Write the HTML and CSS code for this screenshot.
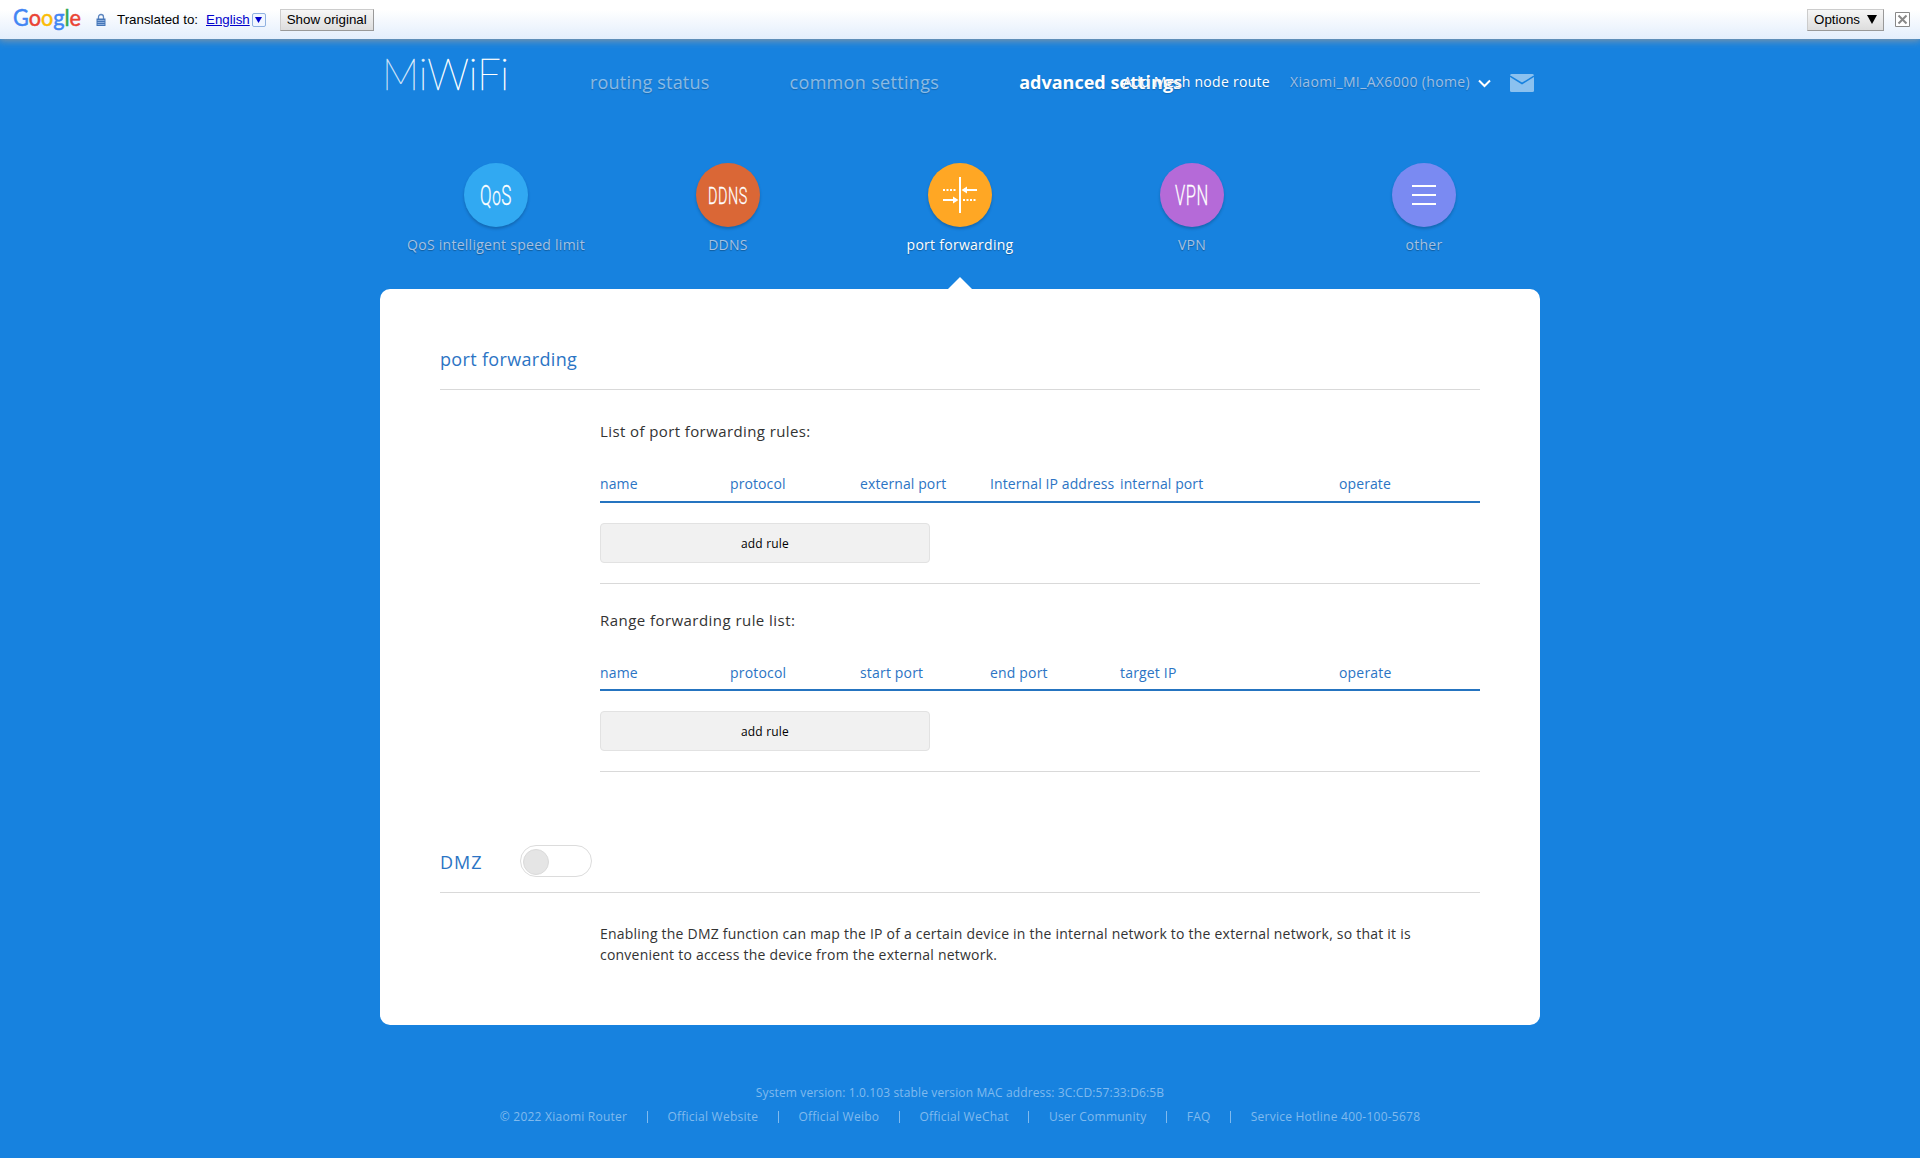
FILE: index.html
```
<!DOCTYPE html>
<html lang="en">
<head>
<meta charset="utf-8">
<title>Xiaomi Router</title>
<link rel="stylesheet" href="styles.css">
</head>
<body>
<div class="banner">
  <svg class="google" width="70" height="32" viewBox="0 0 70 32" aria-label="Google"><text x="-1" y="22" textLength="68" lengthAdjust="spacingAndGlyphs"><tspan fill="#4285f4" stroke="#4285f4">G</tspan><tspan fill="#ea4335" stroke="#ea4335">o</tspan><tspan fill="#fbbc05" stroke="#fbbc05">o</tspan><tspan fill="#4285f4" stroke="#4285f4">g</tspan><tspan fill="#34a853" stroke="#34a853">l</tspan><tspan fill="#ea4335" stroke="#ea4335">e</tspan></text></svg>
  <svg class="lock" width="10" height="12" viewBox="0 0 10 12"><path d="M2.5 5V3a2.5 2.5 0 0 1 5 0v2" fill="none" stroke="#5d86bf" stroke-width="1.3"/><path d="M.5 4.5h9V12h-9z" fill="#4576b8"/><path d="M1.5 6.5h7M1.5 8.5h7M1.5 10.5h7" stroke="#9dbce6" stroke-width=".8"/></svg>
  <span class="translated">Translated to:</span>
  <a class="language">English</a>
  <span class="drop"><svg width="7" height="6" viewBox="0 0 7 6"><path d="M0 0h7L3.5 6z" fill="#00c"/></svg></span>
  <span class="button">Show original</span>
  <span class="button options">Options <svg width="10" height="9" viewBox="0 0 10 9"><path d="M0 0h10L5 9z"/></svg></span>
  <svg class="close" width="15" height="15" viewBox="0 0 15 15" fill="none" stroke="#888"><path d="M.5.5h14v14H.5z" fill="#fff"/><path d="M3.5 3.5l8 8M11.500 3.500l-8 8" stroke-width="2"/></svg>
</div>
<div class="page">
  <header class="header">
    <svg class="logo" width="126" height="50" viewBox="0 0 126 50">
      <defs><linearGradient id="fade"><stop offset="0" stop-color="#fff" stop-opacity=".6"/><stop offset=".6" stop-color="#fff"/></linearGradient></defs>
      <text x="-2" y="36" textLength="127" lengthAdjust="spacingAndGlyphs" fill="url(#fade)">MiWiFi</text>
    </svg>
    <nav class="nav"><a>routing status</a><a class="common">common settings</a><a class="current">advanced settings</a></nav>
    <div class="tools">
      <span class="mesh">Add Mesh node route</span>
      <span class="router">Xiaomi_MI_AX6000 (home)</span>
      <svg class="chevron" width="13" height="9" viewBox="0 0 13 9"><path d="M1 1.500l5.500 5.500L12 1.500" fill="none" stroke="#fff" stroke-width="2"/></svg>
      <svg class="mail" width="24" height="18" viewBox="0 0 24 18"><rect width="24" height="18" rx="1.500" fill="#8bc1ef"/><path d="M0 2.200l12 7.300 12-7.300" fill="none" stroke="#1782df" stroke-width="1.500"/></svg>
    </div>
  </header>
  <div class="tabs">
    <a class="tab"><span class="disc qos"><svg width="64" height="64"><text x="16" y="42" textLength="32" lengthAdjust="spacingAndGlyphs">Q<tspan class="o">o</tspan>S</text></svg></span>QoS intelligent speed limit</a>
    <a class="tab"><span class="disc ddns"><svg width="64" height="64"><text class="small" x="12" y="41" textLength="40" lengthAdjust="spacingAndGlyphs">DDNS</text></svg></span>DDNS</a>
    <a class="tab active"><span class="disc port"><svg width="64" height="64" viewBox="0 0 64 64" fill="none" stroke="#fff" stroke-width="2"><path d="M32 14v36M37 27h12M15 37h12"/><path d="M15 27h14M35 37h14" stroke-dasharray="2 1.500"/><path d="M33.500 27l5.500-3.500v7zM30.500 37L25 33.500v7z" fill="#fff" stroke="none"/></svg></span>port forwarding</a>
    <a class="tab"><span class="disc vpn"><svg width="64" height="64"><text x="15" y="42" textLength="34" lengthAdjust="spacingAndGlyphs">VPN</text></svg></span>VPN</a>
    <a class="tab"><span class="disc other"><svg width="64" height="64" viewBox="0 0 64 64"><path d="M20 23h24M20 32h24M20 41h24" stroke="#fff" stroke-width="2"/></svg></span>other</a>
  </div>
  <main class="card">
    <h2>port forwarding</h2>
    <section class="rules">
      <h3>List of port forwarding rules:</h3>
      <div class="columns"><span>name</span><span>protocol</span><span>external port</span><span>Internal IP address</span><span>internal port</span><span>operate</span></div>
      <a class="add">add rule</a>
    </section>
    <section class="rules range">
      <h3>Range forwarding rule list:</h3>
      <div class="columns"><span>name</span><span>protocol</span><span>start port</span><span>end port</span><span>target IP</span><span>operate</span></div>
      <a class="add">add rule</a>
    </section>
    <h2 class="dmz">DMZ<span class="toggle"></span></h2>
    <p class="note">Enabling the DMZ function can map the IP of a certain device in the internal network to the external network, so that it is<br>convenient to access the device from the external network.</p>
  </main>
  <footer class="footer">
    <div class="version">System version: 1.0.103 stable version MAC address: 3C:CD:57:33:D6:5B</div>
    <div class="links"><span>© 2022 Xiaomi Router</span><i></i><span>Official Website</span><i></i><span>Official Weibo</span><i></i><span>Official WeChat</span><i></i><span>User Community</span><i></i><span>FAQ</span><i></i><span>Service Hotline 400-100-5678</span></div>
  </footer>
</div>
</body>
</html>
```
FILE: styles.css
```
* { box-sizing: border-box; }
body { margin: 0; min-height: 1158px; background: #1782df; color: #333; font: 14px "Open Sans", "Noto Sans", sans-serif; letter-spacing: .1px; }
svg { display: block; flex: none; overflow: visible; }

.banner { position: relative; display: flex; align-items: center; height: 39px; padding: 0 10px 0 14px; background: linear-gradient(#fff 25%, #e3eefc); box-shadow: 0 0 8px 1px #999; color: #000; font: 13.333px "Liberation Sans", Arial, sans-serif; letter-spacing: 0; white-space: nowrap; }
.google { margin-bottom: -1px; font: 23.5px Lato, sans-serif; stroke-width: .5; }
.lock { margin-left: 12px; }
.translated { width: 80px; margin-left: 11px; }
.language { margin-left: 9px; color: #00c; text-decoration: underline; }
.drop { display: flex; align-items: center; justify-content: center; width: 14px; height: 14px; margin-left: 2px; border: 1px solid #8fb1e0; border-radius: 2px; background: #f0f6ff; }
.button { display: flex; align-items: center; justify-content: center; gap: 7px; width: 94px; height: 22px; margin-left: 14px; background: linear-gradient(#f6f6f6, #ddd); border: 1px solid #ccc; border-right-color: #999; border-bottom-color: #999; }
.options { width: 77px; margin-left: auto; }
.close { margin-left: 11px; }

.page { width: 1160px; margin: 0 auto; }
.header { position: relative; display: flex; align-items: center; height: 86px; }
.logo { margin: -7px 0 0 4px; font: 100 44px Lato, sans-serif; letter-spacing: 0; stroke: url(#fade); stroke-width: .6; }
.nav { display: flex; gap: 80px; margin-left: 80px; font-size: 18px; line-height: 26px; color: rgba(255, 255, 255, .52); text-shadow: 0 1px 1px rgba(0, 0, 0, .2); letter-spacing: .2px; white-space: nowrap; }
.nav .common { letter-spacing: .33px; }
.nav .current { font-weight: 700; color: #fff; letter-spacing: 0; }
.tools { position: absolute; right: 6px; top: 31px; display: flex; align-items: center; height: 24px; color: #fff; white-space: nowrap; text-shadow: 0 1px 1px rgba(0, 0, 0, .2); }
.mesh, .router { margin-bottom: 2px; }
.mesh { letter-spacing: .28px; }
.router { margin-left: 20px; letter-spacing: .36px; color: #9fbfe3; }
.chevron { margin: 2px 0 0 8px; }
.mail { margin: 1px 0 0 19px; }

.tabs { display: flex; margin-top: 38px; height: 126px; }
.tab { position: relative; flex: 1; display: flex; flex-direction: column; align-items: center; gap: 8px; line-height: 20px; color: #a5c1e2; letter-spacing: .27px; text-shadow: 0 1px 1px rgba(0, 0, 0, .3); }
.tab.active { color: #fff; }
.tab.active::after { content: ""; position: absolute; bottom: 0; border: 12px solid transparent; border-top: 0; border-bottom-color: #fff; }
.disc { border-radius: 50%; height: 64px; box-shadow: 0 2px 3px rgba(0, 0, 0, .2); text-shadow: none; }
.disc text { font: 300 28px Roboto, sans-serif; letter-spacing: 1px; fill: #fff; stroke: #fff; stroke-width: .3; }
.disc .small { font-size: 24px; }
.disc .o { font-size: 25px; }
.qos { background: #31a9f2; }
.ddns { background: #da6736; }
.port { background: #ffa724; }
.vpn { background: #b56ad8; }
.other { background: #7a8af2; }

.card { height: 736px; padding: 40px 60px 0; border-radius: 10px; background: #fff; }
h2 { display: flex; align-items: center; height: 61px; margin: 0; border-bottom: 1px solid #d9d9d9; color: #2b74c4; font-size: 18px; font-weight: 400; letter-spacing: .33px; }
.rules { margin-left: 160px; border-bottom: 1px solid #d9d9d9; padding-bottom: 20px; }
h3 { margin: 0; font-size: 15px; font-weight: 400; line-height: 82px; letter-spacing: .4px; }
.range h3 { line-height: 72px; margin-bottom: 4px; letter-spacing: .45px; }
.columns { display: grid; grid-template-columns: 130px 130px 130px 130px 219px 1fr; height: 31px; margin-bottom: 20px; border-bottom: 2px solid #2574c0; color: #2b74c4; line-height: 24px; white-space: nowrap; }
.range .columns { line-height: 26px; letter-spacing: .18px; }
.add { display: flex; align-items: center; justify-content: center; width: 330px; height: 40px; border: 1px solid #e2e2e2; border-radius: 4px; background: #f1f1f1; color: #000; font-size: 12px; letter-spacing: .2px; }
.dmz { margin-top: 60px; letter-spacing: 1px; }
.toggle { width: 72px; height: 32px; margin: -2px 0 0 37px; padding: 3px 2px; border: 1px solid #dcdcdc; border-radius: 16px; }
.toggle::before { content: ""; display: block; width: 24px; height: 24px; border: 1px solid #dadada; border-radius: 50%; background: #e5e5e5; }
.note { margin: 30px 0 0 160px; line-height: 21px; letter-spacing: .22px; white-space: nowrap; }

.footer { margin-top: 56px; color: #80baee; font-size: 12px; line-height: 24px; text-align: center; letter-spacing: .13px; }
.links { display: flex; align-items: center; justify-content: center; gap: 19.600px; letter-spacing: .24px; }
.links i { width: 1px; height: 12px; background: #80baee; }
```
